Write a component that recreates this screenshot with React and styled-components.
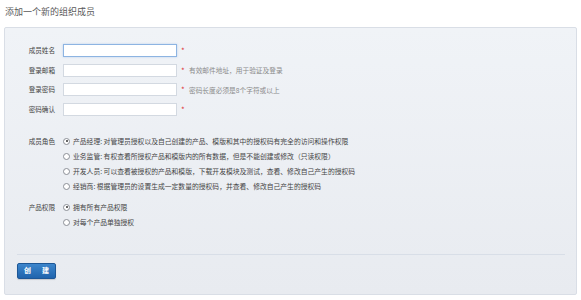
import React from 'react'
import styled, { createGlobalStyle } from 'styled-components'

const GlobalStyle = createGlobalStyle`
  html, body {
    margin: 0;
    padding: 0;
    background: #ffffff;
  }
  body {
    font-family: "Noto Sans CJK SC", "Noto Sans", sans-serif;
    color: #444;
  }
`

const fields = [
    { label: '成员姓名', hint: '', focused: true },
    { label: '登录邮箱', hint: '有效邮件地址，用于验证及登录' },
    { label: '登录密码', hint: '密码长度必须是8个字符或以上' },
    { label: '密码确认', hint: '' }
]

const roles = [
    '产品经理: 对管理员授权以及自己创建的产品、模版和其中的授权码有完全的访问和操作权限',
    '业务监管: 有权查看所授权产品和模版内的所有数据，但是不能创建或修改（只读权限）',
    '开发人员: 可以查看被授权的产品和模版，下载开发模块及测试，查看、修改自己产生的授权码',
    '经销商: 根据管理员的设置生成一定数量的授权码，并查看、修改自己产生的授权码'
]

const scopes = ['拥有所有产品权限', '对每个产品单独授权']

export default function App() {
    return (
        <Page>
            <GlobalStyle />
            <Title>添加一个新的组织成员</Title>
            <Panel>
                <Fields>
                    {fields.map((f, i) => (
                        <FieldRow key={`field-${i}`}>
                            <Label>{f.label}</Label>
                            <Input focused={f.focused} />
                            <Required>*</Required>
                            {f.hint && <Hint>{f.hint}</Hint>}
                        </FieldRow>
                    ))}
                </Fields>

                <Section $top={18}>
                    <Label>成员角色</Label>
                    <Options>
                        {roles.map((r, i) => (
                            <Option key={`role-${i}`}>
                                <Radio checked={i === 0} />
                                {r}
                            </Option>
                        ))}
                    </Options>
                </Section>

                <Section $top={6}>
                    <Label>产品权限</Label>
                    <Options>
                        {scopes.map((s, i) => (
                            <Option key={`scope-${i}`}>
                                <Radio checked={i === 0} />
                                {s}
                            </Option>
                        ))}
                    </Options>
                </Section>

                <Footer>
                    <Button>
                        <span>创</span>
                        <span>建</span>
                    </Button>
                </Footer>
            </Panel>
        </Page>
    )
}

const Page = styled.div`
  width: 581px;
  height: 300px;
  box-sizing: border-box;
  padding: 5px 4px 0 4px;
  display: flex;
  flex-direction: column;
`

const Title = styled.h1`
  margin: 0 0 9px 1px;
  font-size: 9px;
  line-height: 13px;
  font-weight: normal;
  color: #5a5a5a;
`

const Panel = styled.div`
  width: 573px;
  height: 268px;
  box-sizing: border-box;
  border: 1px solid #d9dee6;
  border-radius: 2px;
  background: linear-gradient(#f0f3f7, #e8ebf0);
  padding: 16px 11px 0 12px;
  display: flex;
  flex-direction: column;
`

const Fields = styled.div`
  display: flex;
  flex-direction: column;
  gap: 6.5px;
`

const FieldRow = styled.div`
  display: flex;
  align-items: center;
  height: 13px;
`

const Label = styled.div`
  width: 38px;
  flex-shrink: 0;
  margin-right: 8px;
  text-align: right;
  font-size: 6.6px;
  line-height: 15px;
  color: #444;
  white-space: nowrap;
`

const Input = styled.div`
  width: 114px;
  height: 13px;
  box-sizing: border-box;
  background: #ffffff;
  border: 1px solid ${p => (p.focused ? '#8db4e2' : '#d3d9e1')};
  box-shadow: ${p => (p.focused ? '0 0 2px rgba(90,150,220,0.35)' : 'none')};
`

const Required = styled.span`
  margin-left: 4px;
  color: #e03a3a;
  font-size: 8px;
  line-height: 13px;
  width: 4px;
`

const Hint = styled.span`
  margin-left: 4px;
  font-size: 6.7px;
  color: #8a8a8a;
  white-space: nowrap;
`

const Section = styled.div`
  display: flex;
  align-items: flex-start;
  margin-top: ${p => p.$top}px;
`

const Options = styled.div`
  display: flex;
  flex-direction: column;
`

const Option = styled.div`
  display: flex;
  align-items: center;
  height: 15px;
  font-size: 6.8px;
  color: #444;
  white-space: nowrap;
`

const Radio = styled.span`
  position: relative;
  width: 7px;
  height: 7px;
  box-sizing: border-box;
  margin: 0 3px 0 0;
  border-radius: 50%;
  border: 1px solid #8b8f96;
  background: #fff;
  flex-shrink: 0;

  &::after {
    content: '';
    display: ${p => (p.checked ? 'block' : 'none')};
    position: absolute;
    left: 1.5px;
    top: 1.5px;
    width: 2px;
    height: 2px;
    border-radius: 50%;
    background: #333;
  }
`

const Footer = styled.div`
  margin-top: 24px;
  border-top: 1px solid #d8dee7;
  padding-top: 7px;
`

const Button = styled.button`
  display: flex;
  align-items: center;
  justify-content: center;
  gap: 11px;
  width: 39px;
  height: 16px;
  padding: 0;
  border: 1px solid #1d5796;
  border-radius: 2px;
  background: linear-gradient(#3d86cc, #1f64ad);
  box-shadow: 0 1px 1px rgba(0, 0, 0, 0.15);
  color: #fff;
  font-family: "Noto Sans CJK SC", sans-serif;
  font-size: 7px;
  font-weight: bold;
  line-height: 1;
  margin-left: 0;
  margin-top: 1px;
`
